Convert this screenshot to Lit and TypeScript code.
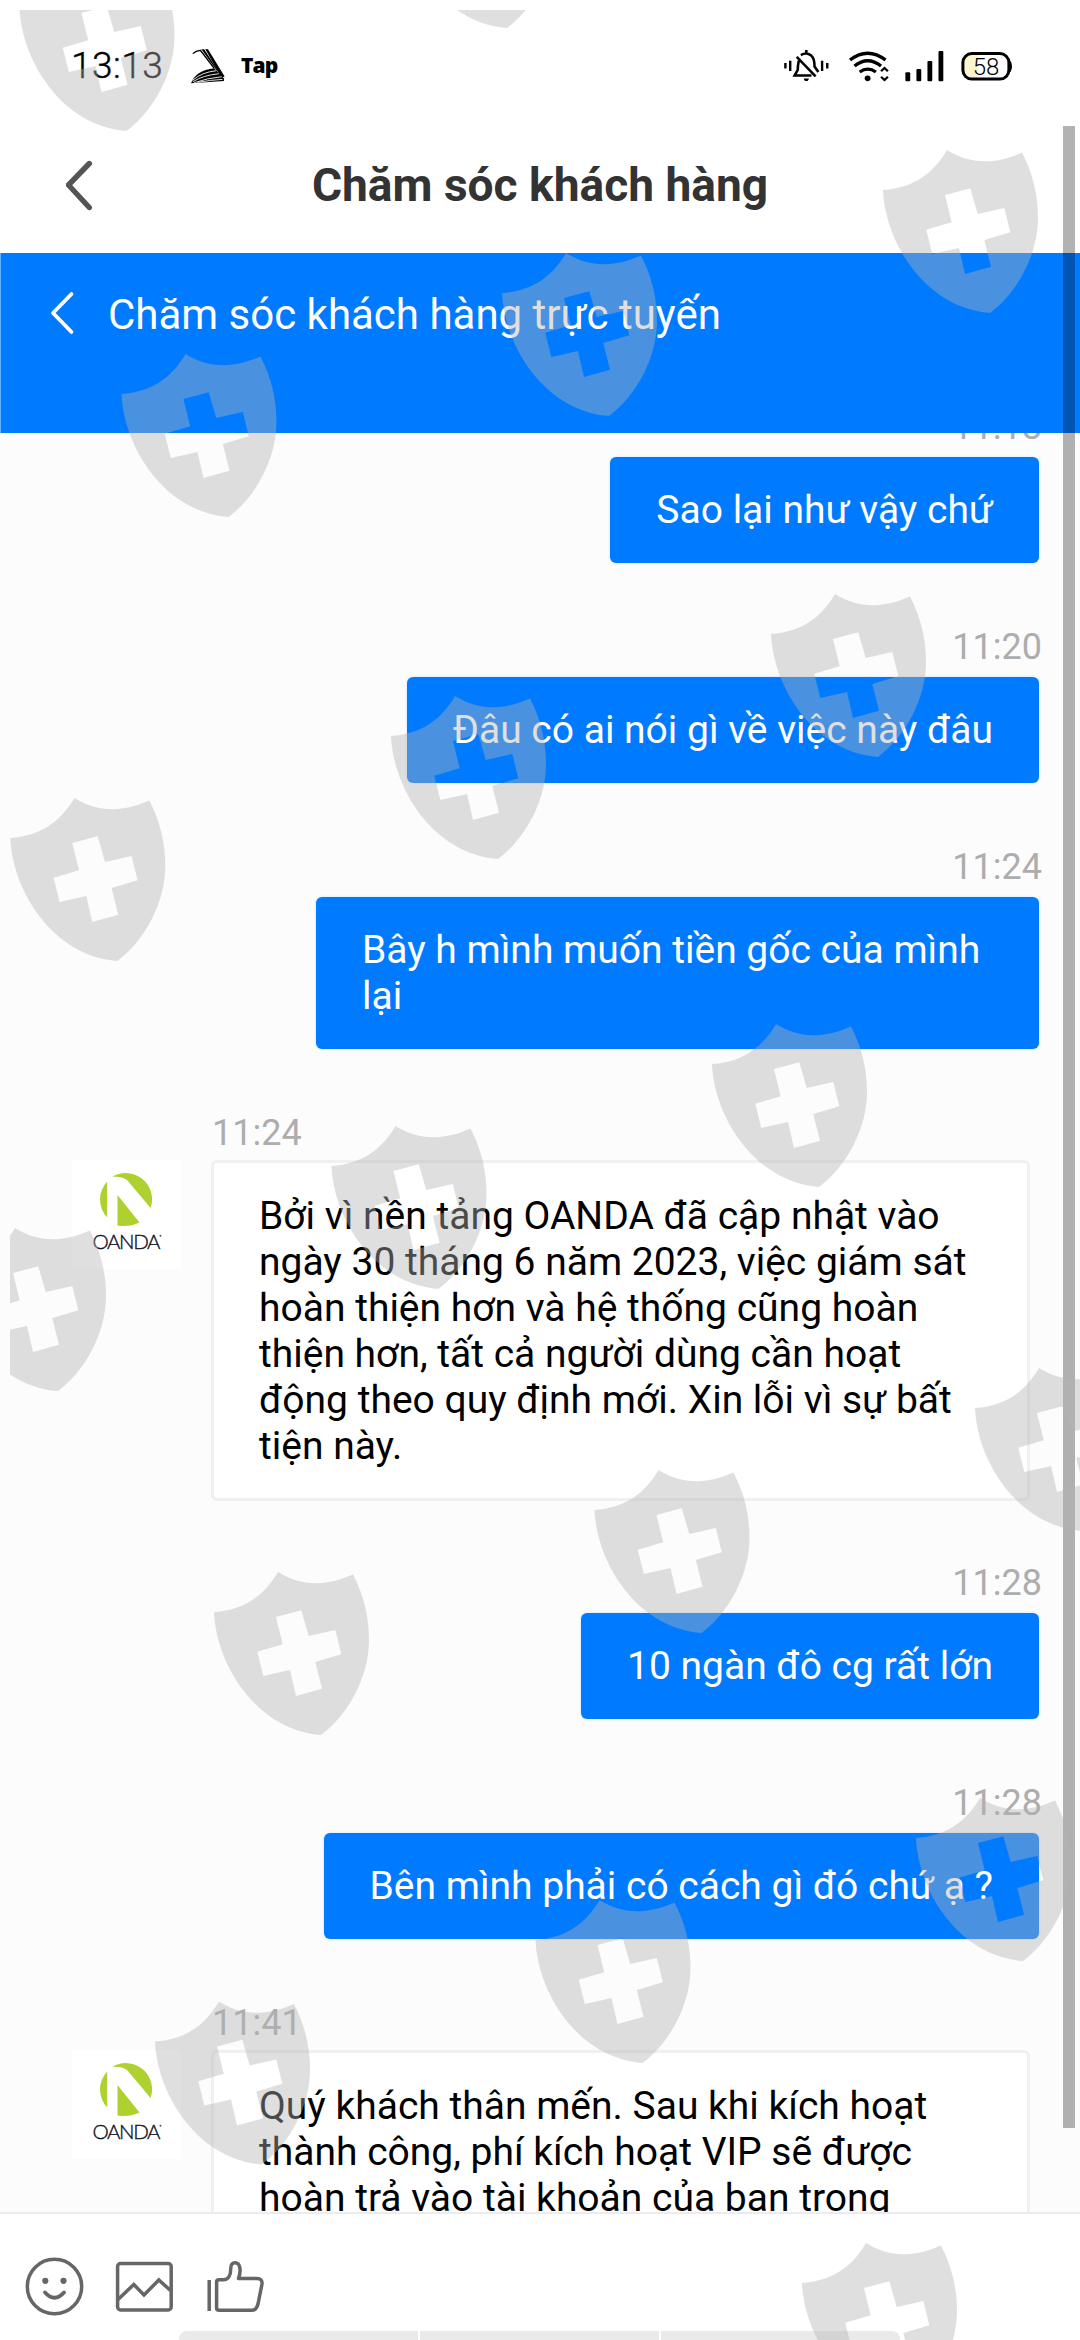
import { LitElement, html, css, svg } from "lit";
import { customElement, property } from "lit/decorators.js";

interface Message {
  time: string;
  lines: string[];
  mine: boolean;
}

const MESSAGES: Message[] = [
  { time: "11:18", lines: ["Sao lại như vậy chứ"], mine: true },
  { time: "11:20", lines: ["Đâu có ai nói gì về việc này đâu"], mine: true },
  { time: "11:24", lines: ["Bây h mình muốn tiền gốc của mình lại"], mine: true },
  {
    time: "11:24",
    lines: [
      "Bởi vì nền tảng OANDA đã cập nhật vào",
      "ngày 30 tháng 6 năm 2023, việc giám sát",
      "hoàn thiện hơn và hệ thống cũng hoàn",
      "thiện hơn, tất cả người dùng cần hoạt",
      "động theo quy định mới. Xin lỗi vì sự bất",
      "tiện này.",
    ],
    mine: false,
  },
  { time: "11:28", lines: ["10 ngàn đô cg rất lớn"], mine: true },
  { time: "11:28", lines: ["Bên mình phải có cách gì đó chứ ạ ?"], mine: true },
  {
    time: "11:41",
    lines: [
      "Quý khách thân mến. Sau khi kích hoạt",
      "thành công, phí kích hoạt VIP sẽ được",
      "hoàn trả vào tài khoản của bạn trong",
    ],
    mine: false,
  },
];

// Top-left corner of every shield in the watermark pattern.
const SHIELDS: [number, number][] = [
  [400, -135], [19.5, -32], [883, 150], [502, 253], [121.5, 354],
  [771, 594], [391, 696], [10.3, 798], [712, 1024], [331.5, 1126],
  [-49, 1228], [975, 1368], [594.5, 1470], [214, 1572], [916, 1798],
  [535.5, 1900], [155, 2001.5], [802, 2243],
];

const SHIELD_PATH =
  "M0 40C30 38 50 24 64 0C85 13 108 16 139 2.5C150 24 155 45 155 68C155 105 134 143 107 163C42 158 2 92 0 40Z" +
  "M62 45L68.7 72.3L43.3 79.7L49.3 104L76 98L82 124L108 116.7L101.3 90L127.3 82.3L121.3 58L94.7 64L87.3 38.3Z";

@customElement("shield-watermark")
class ShieldWatermark extends LitElement {
  static styles = css`
    :host { position: absolute; inset: 10px 0 0 10px; overflow: hidden; pointer-events: none; }
    .pattern { display: block; width: 1070px; height: 2330px; }
  `;
  render() {
    return html`<svg class="pattern" viewBox="10 10 1070 2330" fill="#b2b2b2" fill-opacity=".415" fill-rule="evenodd">
      ${SHIELDS.map(([x, y]) => svg`<path d=${SHIELD_PATH} transform="translate(${x} ${y})"/>`)}
    </svg>`;
  }
}

@customElement("status-bar")
class StatusBar extends LitElement {
  static styles = css`
    :host { display: flex; align-items: flex-start; height: 126px; box-sizing: border-box; padding: 44px 67px 0 71px; color: #000; }
    .time { width: 119px; font: 300 37px/44px Roboto, sans-serif; letter-spacing: 0.5px; -webkit-text-stroke: 0.4px #000; }
    .tap { flex: 1; margin: 4px 0 0 15px; font: 800 21px/34px "Open Sans", sans-serif; letter-spacing: -0.9px; }
    .book { width: 36px; height: 37px; margin-top: 3px; }
    .bell { width: 47px; height: 34px; margin: 5px 18px 0 0; }
    .wifi { width: 42px; height: 32px; margin: 6px 14px 0 0; }
    .signal { width: 40px; height: 31px; margin: 7px 17px 0 0; }
    .battery { width: 52px; height: 30px; margin-top: 7px; }
    .level { font: 300 24px Roboto, sans-serif; }
  `;
  render() {
    return html`
      <span class="time">13:13</span>
      <svg class="book" viewBox="550 139 104 112" preserveAspectRatio="none">
        <path d="M558 159Q567 150 580 149L620 204" fill="none" stroke="#000" stroke-width="4"/>
        <path d="M583 146L591 146L638 222L625 207Z"/>
        <path d="M594 145L602 146L650 228L641 232Z"/>
        <path d="M553 249Q565 210 620 203L648 234L648 242Z"/>
        <path d="M557 240Q585 215 625 211M558 244Q590 224 633 220M562 247Q600 233 642 229M572 246Q610 239 644 237" fill="none" stroke="#fff" stroke-width="2.6"/>
      </svg>
      <span class="tap">Tap</span>
      <svg class="bell" viewBox="703 149 137 99" preserveAspectRatio="none" fill="none" stroke="#000" stroke-width="7">
        <path d="M710 190V206M724 183V213M817 183V213M832 190V206"/>
        <path d="M771 152V161M755 167Q771 157 785 168Q795 176 795 200L806 216M743 172L798 229M749 183Q746 198 746 210L737 226H786" stroke-width="7.5"/>
        <path d="M763 235H779L775 242H767Z" fill="#000" stroke="none"/>
      </svg>
      <svg class="wifi" viewBox="892 149 122 96" preserveAspectRatio="none" fill="none" stroke="#000">
        <path d="M898 179Q949 138 1001 179M911 197Q949 166 988 197M926 215Q949 198 973 215" stroke-width="10"/>
        <circle cx="949" cy="234" r="8.5" fill="#000" stroke="none"/>
        <path d="M988 213L998 203L1008 213M988 229L998 239L1008 229" stroke-width="6.5"/>
      </svg>
      <svg class="signal" viewBox="1053 152 116 93" preserveAspectRatio="none">
        <rect x="1057" y="216" width="14" height="27" rx="3"/>
        <rect x="1089" y="206" width="14" height="37" rx="3"/>
        <rect x="1121" y="182" width="14" height="61" rx="3"/>
        <rect x="1153" y="152" width="14" height="91" rx="3"/>
      </svg>
      <svg class="battery" viewBox="0 0 52 30">
        <rect x="1.9" y="2.6" width="46" height="25.5" rx="9" fill="#fff"/>
        <path d="M11 2.6H17V28H11Q2 28 2 19V11Q2 2.6 11 2.6Z" fill="#fff3d0"/>
        <rect x="1.9" y="2.6" width="46" height="25.5" rx="9" fill="none" stroke="#000" stroke-width="3"/>
        <path d="M48 10H49.5Q51 12 51 15.3Q51 18.5 49.5 21H48Z"/>
        <text class="level" x="25" y="23.6" text-anchor="middle">58</text>
      </svg>
    `;
  }
}

@customElement("brand-avatar")
class BrandAvatar extends LitElement {
  static styles = css`
    :host { display: block; flex: none; width: 109px; height: 109px; background: #fff; }
    .logo { display: block; width: 109px; height: 109px; }
    .name { font: 300 20.5px Lato, sans-serif; fill: #111122; stroke: #111122; stroke-width: 0.35px; }
  `;
  render() {
    return html`<svg class="logo" viewBox="0 0 109 109">
      <path d="M40.5 16.8A26.2 26.2 0 0 1 78.6 48L55.5 20.5Q51 16 40.5 16.8Z" fill="#aed12f"/>
      <path d="M35.2 21.5V57.5A26.2 26.2 0 0 1 35.2 21.5Z" fill="#aed12f"/>
      <path d="M45.5 35L67.5 62.5Q57 67.5 45.5 65.5Z" fill="#aed12f"/>
      <text class="name" x="20.5" y="89" textLength="68" lengthAdjust="spacing">OANDA</text>
      <circle cx="88.5" cy="75.8" r="1" fill="#555"/>
    </svg>`;
  }
}

@customElement("chat-message")
class ChatMessage extends LitElement {
  @property({ attribute: false }) message!: Message;
  static styles = css`
    :host { display: block; }
    .item { display: flex; flex-direction: column; align-items: flex-end; padding-right: 41px; }
    .item.theirs { align-items: flex-start; padding: 0 50px 0 72px; margin-bottom: -2px; }
    .time { margin: 0 -3px 7px 0; color: #adadad; font-size: 36px; line-height: 46px; }
    .theirs .time { margin: 0 0 4px 140px; }
    .row { display: flex; gap: 30px; align-items: flex-start; }
    .theirs .row { width: 958px; }
    .bubble { max-width: 723px; box-sizing: border-box; padding: 30px 46px; border-radius: 6px; background: #007aff; color: #fff; font-size: 39px; line-height: 46px; box-shadow: 0 0 3px rgba(0, 122, 255, 0.2); }
    .theirs .bubble { flex: 1; max-width: none; padding: 30px 44px 29px 45px; border: 3px solid #f0f0f0; background: #fff; color: #000; box-shadow: none; }
    .theirs .line { white-space: nowrap; }
  `;
  render() {
    const m = this.message;
    return html`<div class="item ${m.mine ? "mine" : "theirs"}">
      <div class="time">${m.time}</div>
      <div class="row">
        ${m.mine ? null : html`<brand-avatar></brand-avatar>`}
        <div class="bubble">${m.lines.map((l) => html`<div class="line">${l}</div>`)}</div>
      </div>
    </div>`;
  }
}

@customElement("app-root")
class AppRoot extends LitElement {
  static styles = css`
    :host { display: block; }
    .screen { position: relative; display: flex; flex-direction: column; width: 1080px; height: 2340px; overflow: hidden; background: #fff; font-family: Roboto, sans-serif; }
    .titlebar { display: grid; grid-template-columns: 97px 1fr 97px; align-items: center; flex: none; height: 127px; box-sizing: border-box; padding-bottom: 10px; }
    .back { width: 31px; height: 52px; justify-self: end; }
    .title { margin: 0; text-align: center; color: #333; font-size: 46.1px; line-height: 60px; font-weight: 700; white-space: nowrap; }
    .banner { display: flex; align-items: flex-start; gap: 32px; flex: none; height: 180px; box-sizing: border-box; padding: 32px 0 0 48px; border-left: 1px solid #66afff; background: #007aff; color: #fff; }
    .banner-back { width: 27px; height: 48px; margin-top: 4px; }
    .subtitle { font-size: 42px; line-height: 58px; white-space: nowrap; margin-top: 1px; }
    .chat { display: flex; flex-direction: column; gap: 61px; flex: 1; min-height: 0; overflow: hidden; background: #fcfcfc; }
    .chat > :first-child { margin-top: -29px; }
    .composer { display: flex; flex-direction: column; justify-content: space-between; flex: none; height: 128px; box-sizing: border-box; border-top: 2px solid #ececec; background: #fff; }
    .tools { display: flex; gap: 28px; padding: 42px 0 0 24px; }
    .tool { width: 62px; height: 62px; }
    .keys { display: flex; gap: 2px; width: 721px; height: 9px; margin-left: 179px; }
    .key { flex: 1; background: #eaeaea; }
    .key:first-child { border-top-left-radius: 8px; }
    .key:last-child { border-top-right-radius: 8px; }
    .scrollbar { position: absolute; left: 1063px; top: 126px; width: 12px; height: 2002px; background: rgba(0, 0, 0, 0.3); }
  `;
  render() {
    return html`<div class="screen">
      <status-bar></status-bar>
      <header class="titlebar">
        <svg class="back" viewBox="0 0 31 52" fill="none" stroke="#555" stroke-width="5.4" stroke-linecap="round" stroke-linejoin="round">
          <path d="M23.3 4.5L2.5 26L23.3 48.5"/>
        </svg>
        <h1 class="title">Chăm sóc khách hàng</h1>
      </header>
      <div class="banner">
        <svg class="banner-back" viewBox="0 0 27 48" fill="none" stroke="#fff" stroke-width="3.8" stroke-linecap="round" stroke-linejoin="round">
          <path d="M22.5 5L4 24L22.5 43"/>
        </svg>
        <div class="subtitle">Chăm sóc khách hàng trực tuyến</div>
      </div>
      <main class="chat">${MESSAGES.map((m) => html`<chat-message .message=${m}></chat-message>`)}</main>
      <footer class="composer">
        <div class="tools">
          <svg class="tool" viewBox="0 0 62 62" fill="none" stroke="#666" stroke-width="3.5" stroke-linecap="round">
            <circle cx="30.5" cy="30.5" r="27.2"/>
            <path d="M21 36.5Q30.5 47 40 36.5" stroke-width="3.8"/>
            <circle cx="21.3" cy="24.8" r="3.1" fill="#666" stroke="none"/>
            <circle cx="39.5" cy="24.8" r="3.1" fill="#666" stroke="none"/>
          </svg>
          <svg class="tool" viewBox="0 0 62 62" fill="none" stroke="#666" stroke-width="3.5">
            <rect x="3.6" y="7.6" width="53.6" height="46.4" rx="3"/>
            <path d="M4 43.5L19.8 28.5L30 39L44.8 24L56.5 34.5"/>
          </svg>
          <svg class="tool" viewBox="0 0 62 62" fill="none" stroke="#666" stroke-width="3.5" stroke-linejoin="round">
            <path d="M5.2 24V55"/>
            <path d="M12.6 25.5V52Q12.6 54.2 15 54.2H48Q52.5 54.2 54 48L58 28Q58.5 22.4 53 22.4H34.5C37.5 14 36 6.8 31.2 6.8C27.5 6.8 26.7 10 26.7 13C26.7 19 24.5 23.8 19.5 23.8H15Q12.6 23.8 12.6 26"/>
          </svg>
        </div>
        <div class="keys"><div class="key"></div><div class="key"></div><div class="key"></div></div>
      </footer>
      <div class="scrollbar"></div>
      <shield-watermark></shield-watermark>
    </div>`;
  }
}
